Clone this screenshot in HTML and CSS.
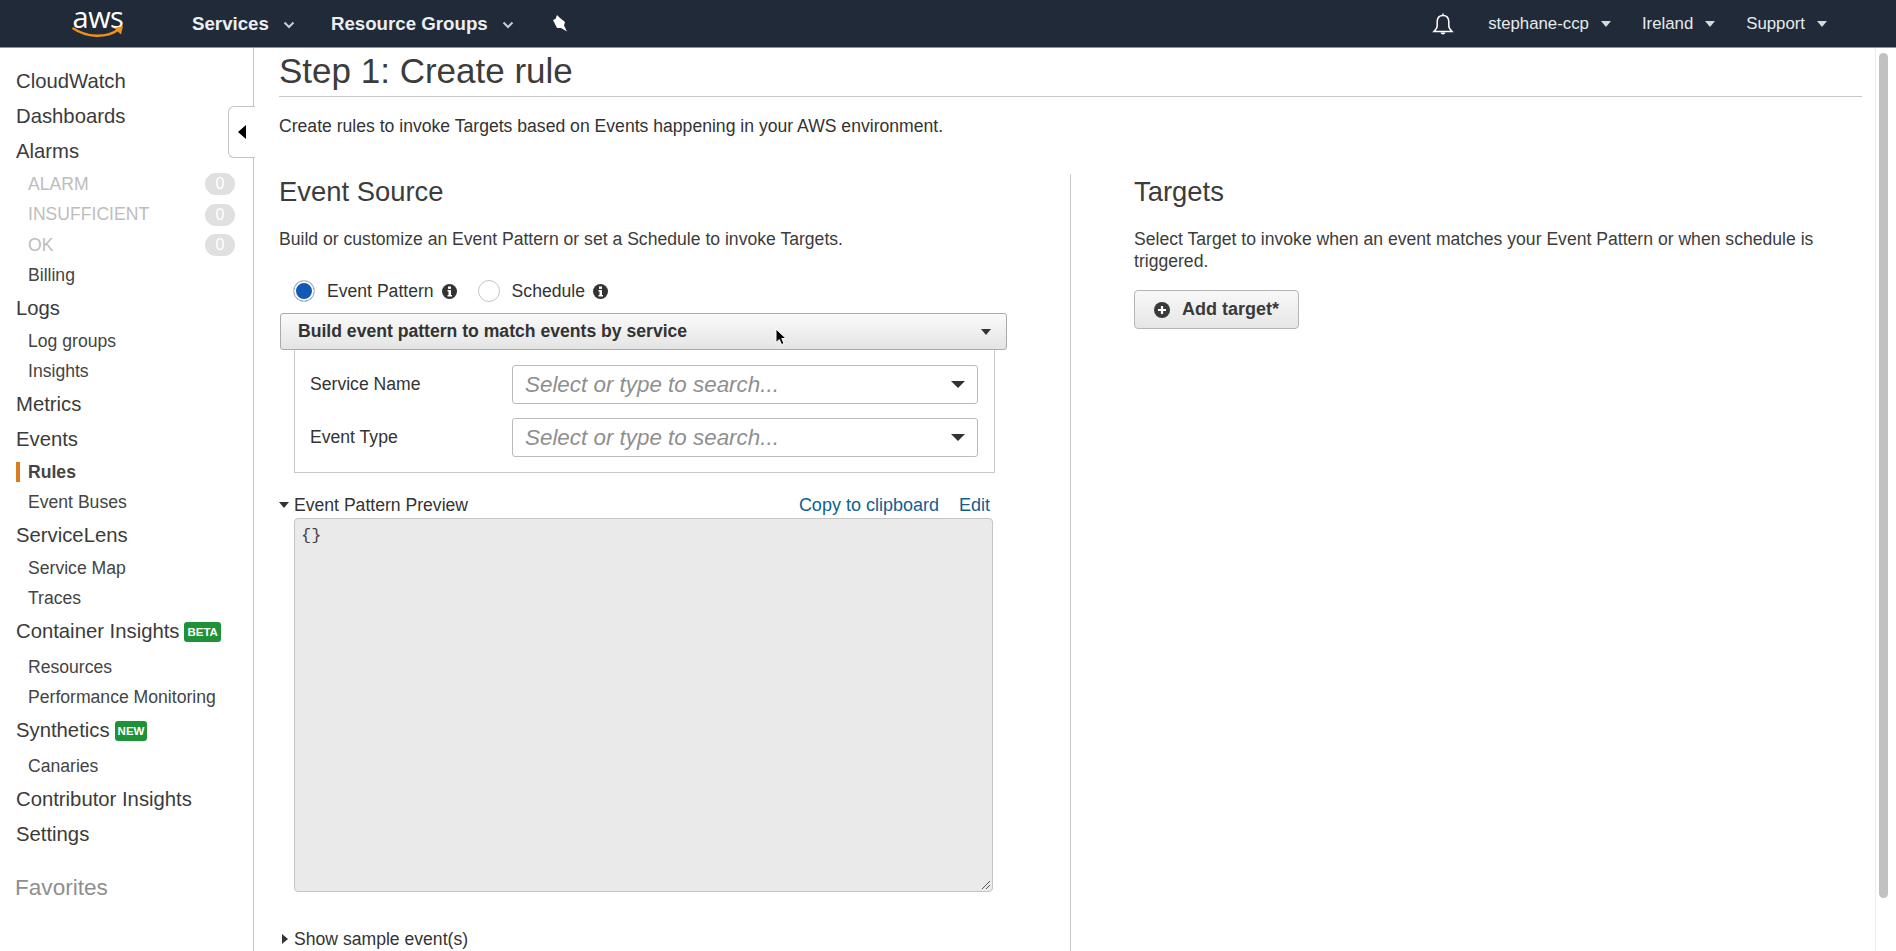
FILE: index.html
```html
<!DOCTYPE html>
<html lang="en">
<head>
  <meta charset="UTF-8">
  <title>CloudWatch Management Console</title>
  <meta name="viewport" content="width=device-width,initial-scale=1">
  <link rel="stylesheet" href="styles.css">
</head>
<body>
  <header class="topbar">
    <div class="logo">
      <span class="logo-text">aws</span>
      <svg class="logo-smile" width="52" height="14" viewBox="0 0 52 14">
        <path d="M0.500 3C15 13 34 13 46 5" fill="none" stroke="#f0911a" stroke-width="2.400"/>
        <path d="M42 3L51 1L49 9.500Z" fill="#f0911a"/>
      </svg>
    </div>
    <a class="top-menu">Services <svg class="chev" width="12" height="8" viewBox="0 0 12 8"><path d="M1.5 1.5L6 6l4.5-4.5" fill="none" stroke="#c9ccd1" stroke-width="2"/></svg></a>
    <a class="top-menu second">Resource Groups <svg class="chev" width="12" height="8" viewBox="0 0 12 8"><path d="M1.5 1.5L6 6l4.5-4.5" fill="none" stroke="#c9ccd1" stroke-width="2"/></svg></a>
    <svg class="pin" width="16" height="18" viewBox="0 0 16 18">
      <path d="M5 1L8 4L13 8L12 11.500L15 17.500L9 14L5 14L1 6L3.500 5Z" fill="#fff"/>
    </svg>
    <div class="top-right">
      <svg class="bell" width="22" height="24" viewBox="0 0 22 24">
        <path d="M11 1.5V3.5M11 3.5C7 3.5 5.2 6.5 5.2 10V14C5.2 16 4 17.5 2 19.5H20C18 17.5 16.8 16 16.8 14V10C16.8 6.5 15 3.5 11 3.5Z" fill="none" stroke="#fff" stroke-width="1.5"/>
        <path d="M8.5 20.5C9 23 13 23 13.5 20.5Z" fill="#fff"/>
      </svg>
      <a class="user-menu">stephane-ccp <i class="tri"></i></a>
      <a class="user-menu">Ireland <i class="tri"></i></a>
      <a class="user-menu">Support <i class="tri"></i></a>
    </div>
  </header>

  <div class="page">
    <nav class="sidebar">
      <a class="nav-top">CloudWatch</a>
      <a class="nav-top">Dashboards</a>
      <a class="nav-top">Alarms</a>
      <a class="nav-sub muted">ALARM <span class="count">0</span></a>
      <a class="nav-sub muted">INSUFFICIENT <span class="count">0</span></a>
      <a class="nav-sub muted">OK <span class="count">0</span></a>
      <a class="nav-sub">Billing</a>
      <a class="nav-top">Logs</a>
      <a class="nav-sub">Log groups</a>
      <a class="nav-sub">Insights</a>
      <a class="nav-top">Metrics</a>
      <a class="nav-top">Events</a>
      <a class="nav-sub active"><span>Rules</span></a>
      <a class="nav-sub">Event Buses</a>
      <a class="nav-top">ServiceLens</a>
      <a class="nav-sub">Service Map</a>
      <a class="nav-sub">Traces</a>
      <a class="nav-top tagged">Container Insights <span class="tag">BETA</span></a>
      <a class="nav-sub">Resources</a>
      <a class="nav-sub">Performance Monitoring</a>
      <a class="nav-top tagged">Synthetics <span class="tag">NEW</span></a>
      <a class="nav-sub">Canaries</a>
      <a class="nav-top">Contributor Insights</a>
      <a class="nav-top">Settings</a>
      <div class="favorites">Favorites</div>
    </nav>
    <button class="collapse"><i></i></button>

    <main class="content">
      <h1>Step 1: Create rule</h1>
      <p class="intro">Create rules to invoke Targets based on Events happening in your AWS environment.</p>

      <div class="columns">
        <section class="source">
          <h2>Event Source</h2>
          <p class="lead">Build or customize an Event Pattern or set a Schedule to invoke Targets.</p>

          <div class="radios">
            <span class="radio checked"></span>
            <label>Event Pattern</label>
            <svg class="info" width="15" height="15" viewBox="0 0 15 15"><circle cx="7.5" cy="7.5" r="7.5" fill="#333"/><rect x="6" y="2.5" width="3" height="2.4" fill="#fff"/><path d="M5.5 6h3.5v5h1v1.5h-4.500V11h1V7.500h-1z" fill="#fff"/></svg>
            <span class="radio second"></span>
            <label>Schedule</label>
            <svg class="info" width="15" height="15" viewBox="0 0 15 15"><circle cx="7.5" cy="7.5" r="7.5" fill="#333"/><rect x="6" y="2.5" width="3" height="2.4" fill="#fff"/><path d="M5.5 6h3.5v5h1v1.5h-4.500V11h1V7.500h-1z" fill="#fff"/></svg>
          </div>

          <div class="accordion">Build event pattern to match events by service <i class="tri dark"></i></div>
          <div class="panel">
            <div class="field">
              <label>Service Name</label>
              <div class="select">Select or type to search... <i class="tri dark big"></i></div>
            </div>
            <div class="field">
              <label>Event Type</label>
              <div class="select">Select or type to search... <i class="tri dark big"></i></div>
            </div>
          </div>

          <div class="preview-head">
            <span><i class="tri dark"></i>Event Pattern Preview</span>
            <span class="links"><a>Copy to clipboard</a><a>Edit</a></span>
          </div>
          <div class="code">{}
            <svg class="grip" width="10" height="10" viewBox="0 0 10 10"><path d="M1 9L9 1M5 9L9 5" stroke="#555" stroke-width="1"/></svg>
          </div>

          <div class="sample"><i class="side-tri"></i>Show sample event(s)</div>
        </section>

        <section class="targets">
          <h2>Targets</h2>
          <p class="lead">Select Target to invoke when an event matches your Event Pattern or when schedule is triggered.</p>
          <button class="add-btn">
            <svg width="16" height="16" viewBox="0 0 16 16"><circle cx="8" cy="8" r="8" fill="#3a3a3a"/><path d="M8 4v8M4 8h8" stroke="#fff" stroke-width="2.2"/></svg>
            Add target*
          </button>
        </section>
      </div>
    </main>

    <div class="scrollbar"><div class="thumb"></div></div>
  </div>

  <svg class="cursor" width="13" height="18" viewBox="0 0 13 18">
    <path d="M1 1V14.500L4.300 11.500L6.500 16.500L9 15.500L6.800 10.500H11Z" fill="#000" stroke="#fff" stroke-width="1"/>
  </svg>
</body>
</html>
```

FILE: styles.css
```css
* { box-sizing: border-box; }
html, body { height: 100%; }
body {
  margin: 0; overflow: hidden;
  display: flex; flex-direction: column;
  font-family: "Liberation Sans", Arial, sans-serif;
  color: #333; background: #fff;
}
a { cursor: pointer; }

/* top bar */
.topbar {
  height: 48px; flex: none;
  display: flex; align-items: center;
  background: #202a39;
  border-bottom: 1px solid #8d939b;
  color: #fff;
  padding-left: 72px;
}
.logo { width: 52px; height: 44px; position: relative; }
.logo-text {
  display: block;
  font: 400 29px/34px "Open Sans", sans-serif;
  text-align: center; letter-spacing: -0.5px;
  margin-top: -2px;
}
.logo-smile { position: absolute; left: 0; top: 23px; }
.top-menu {
  font-size: 18.7px; font-weight: 700; color: #eceef0;
  display: flex; align-items: center; gap: 14px;
  margin-left: 68px;
}
.top-menu.second { margin-left: 36px; }
.chev { margin-top: 2px; }
.pin { margin-left: 38px; margin-top: -2px; }
.top-right {
  margin-left: auto; margin-right: 69px;
  display: flex; align-items: center;
}
.bell { margin-right: 34px; }
.user-menu {
  font-size: 16.8px; color: #e8eaec;
  display: flex; align-items: center; gap: 12px;
  margin-right: 31px;
}
.user-menu:last-child { margin-right: 0; }
.tri {
  display: inline-block; width: 0; height: 0;
  border: 5px solid transparent; border-top: 6px solid #d6d8db; border-bottom: 0;
}
.tri.dark { border-top-color: #333; }
.tri.big { border-width: 7px 7px 0; }

/* side nav */
.page { flex: 1; display: flex; min-height: 0; position: relative; }
.sidebar {
  width: 254px; flex: none;
  border-right: 1px solid #c4c4c4;
  padding-top: 16px;
}
.nav-top {
  display: flex; align-items: center; gap: 5px;
  height: 35px; padding-left: 16px;
  font-size: 20.3px; color: #3b3b3b;
}
.nav-top.tagged { margin-bottom: 3px; }
.nav-sub {
  display: flex; align-items: center; justify-content: space-between;
  height: 30.5px; padding: 0 18px 0 28px;
  font-size: 17.6px; color: #444;
}
.nav-sub.muted { color: #bdbdbd; }
.nav-sub.active { padding-left: 16px; font-weight: 700; justify-content: flex-start; }
.nav-sub.active span { border-left: 4px solid #dd7c1d; padding-left: 8px; line-height: 20px; }
.count {
  width: 30px; height: 22px; border-radius: 11px;
  background: #e0e0e0; color: #fff;
  font-size: 16px; line-height: 22px; text-align: center;
}
.tag {
  background: #1f9136; color: #fff;
  font-size: 11.5px; font-weight: 700; line-height: 20px;
  padding: 0 3px; border-radius: 3px;
}
.favorites { font-size: 22.6px; color: #8f8f8f; margin-top: 21px; padding-left: 15px; line-height: 30px; }

.collapse {
  position: absolute; left: 228px; top: 58px;
  width: 27px; height: 52px; padding: 0 0 0 9px;
  background: #fff; cursor: pointer;
  border: 1px solid #c4c4c4; border-right: 0;
  border-radius: 6px 0 0 6px;
}
.collapse i {
  display: block; width: 0; height: 0;
  border: 7px solid transparent; border-right: 8px solid #000; border-left: 0;
}

/* main */
.content { flex: 1; min-width: 0; padding: 0 13px 0 25px; }
h1 {
  margin: 0; height: 49px;
  font-size: 35px; font-weight: 400; line-height: 46px; color: #3c3c3c;
  border-bottom: 1px solid #c8c8c8;
}
.intro { margin: 19px 0 0; font-size: 17.6px; line-height: 20px; }
.columns { display: flex; margin-top: 38px; height: 780px; }
.source { width: 792px; flex: none; border-right: 1px solid #c8c8c8; }
.targets { flex: 1; padding-left: 63px; }
h2 { margin: 0; font-size: 27.4px; font-weight: 400; line-height: 36px; color: #3c3c3c; }
.lead { margin: 18px 0 0; font-size: 17.6px; line-height: 22px; color: #3c3c3c; }
.targets .lead { padding-right: 40px; }

.radios { display: flex; align-items: center; margin: 29px 0 0 14px; height: 24px; font-size: 17.6px; }
.radio { width: 22px; height: 22px; border-radius: 50%; border: 1px solid #c4c4c4; background: #fff; }
.radio.checked { background: #1259b5; box-shadow: inset 0 0 0 2px #fff; }
.radio.second { margin-left: 21px; }
.radios label { margin-left: 12px; }
.info { margin-left: 8px; }

.accordion {
  margin-top: 10px; width: 727px; height: 37px; margin-left: 1px;
  display: flex; align-items: center; justify-content: space-between;
  padding: 0 15px 0 17px;
  font-size: 17.6px; font-weight: 700;
  background: linear-gradient(#fafafa, #e4e4e4);
  border: 1px solid #aaa; border-radius: 3px;
}
.panel {
  width: 701px; height: 123px; margin-left: 15px;
  border: 1px solid #c8c8c8; border-top: 0;
  padding: 15px 16px 0 15px;
}
.field { display: flex; align-items: center; margin-bottom: 14px; }
.field label { width: 202px; flex: none; font-size: 17.6px; }
.select {
  flex: 1; height: 39px;
  display: flex; align-items: center; justify-content: space-between;
  padding: 0 12px 0 12px;
  border: 1px solid #bbb; border-radius: 3px;
  font-size: 22.4px; font-style: italic; color: #8f8f8f;
}
.preview-head {
  width: 711px; margin-top: 22px; height: 21px;
  display: flex; justify-content: space-between; align-items: center;
  font-size: 17.6px;
}
.preview-head .tri { margin-right: 5px; vertical-align: 3px; }
.links { font-size: 18px; }
.links a { color: #0f5f92; margin-left: 20px; }
.code {
  position: relative;
  width: 699px; height: 374px; margin: 2px 0 0 15px;
  padding: 7px 6px;
  background: #eaeaea; border: 1px solid #c4c4c4; border-radius: 4px;
  font-family: "Liberation Mono", monospace; font-size: 17px; color: #444;
}
.grip { position: absolute; right: 1px; bottom: 1px; }
.sample { margin-top: 37px; font-size: 17.6px; line-height: 21px; }
.side-tri {
  display: inline-block; width: 0; height: 0; margin: 0 6px 1px 3px;
  border: 5px solid transparent; border-left: 6px solid #333; border-right: 0;
}

.add-btn {
  margin-top: 18px; height: 39px; width: 165px;
  display: flex; align-items: center; gap: 12px;
  padding: 0 0 0 19px;
  font: 700 18px "Liberation Sans", Arial, sans-serif; color: #3a3a3a;
  background: linear-gradient(#f8f8f8, #e6e6e6);
  border: 1px solid #b5b5b5; border-radius: 4px;
}

.scrollbar {
  width: 21px; flex: none;
  border-left: 1px solid #ececec;
  padding: 5px 9px 0 3px;
}
.thumb { width: 9px; height: 845px; background: #c1c1c1; border-radius: 5px; }

.cursor { position: absolute; left: 775px; top: 328px; }
```
